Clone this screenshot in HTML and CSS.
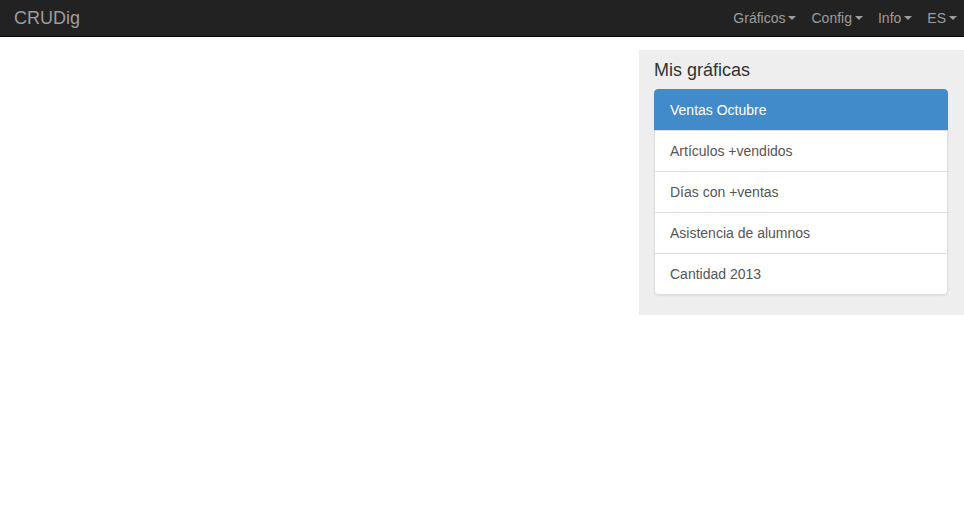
FILE: index.html
```html
<!DOCTYPE html>
<html lang="es">
<head>
<meta charset="utf-8">
<title>CRUDig</title>
<link rel="stylesheet" href="styles.css">
</head>
<body>
<nav class="navbar">
  <a class="brand" href="#">CRUDig</a>
  <ul class="nav">
    <li><a href="#">Gráficos<span class="caret"></span></a></li>
    <li><a href="#">Config<span class="caret"></span></a></li>
    <li><a href="#">Info<span class="caret"></span></a></li>
    <li><a href="#">ES<span class="caret"></span></a></li>
  </ul>
</nav>
<main class="main">
  <div class="content"></div>
  <aside class="sidebar">
    <h3 class="sidebar-title">Mis gráficas</h3>
    <div class="list-group">
      <a class="list-item active" href="#">Ventas Octubre</a>
      <a class="list-item" href="#">Artículos +vendidos</a>
      <a class="list-item" href="#">Días con +ventas</a>
      <a class="list-item" href="#">Asistencia de alumnos</a>
      <a class="list-item" href="#">Cantidad 2013</a>
    </div>
  </aside>
</main>
</body>
</html>
```
FILE: styles.css
```css
* { box-sizing: border-box; }
html, body {
  margin: 0;
  padding: 0;
  background: #fff;
  font-family: "Liberation Sans", Arial, Helvetica, sans-serif;
  font-size: 14px;
  line-height: 20px;
  color: #333;
}
a { text-decoration: none; }

.navbar {
  display: flex;
  align-items: center;
  justify-content: space-between;
  height: 37px;
  background: #222;
  border-bottom: 1px solid #080808;
}
.brand {
  padding: 0 14px;
  font-size: 18px;
  line-height: 36px;
  color: #9d9d9d;
}
.nav {
  display: flex;
  list-style: none;
  margin: 0;
  padding: 0;
}
.nav a {
  display: flex;
  align-items: center;
  padding: 0 7px 0 8px;
  line-height: 36px;
  color: #9d9d9d;
}
.caret {
  display: inline-block;
  width: 0;
  height: 0;
  margin-left: 3px;
  border-top: 4px solid #9d9d9d;
  border-left: 4px solid transparent;
  border-right: 4px solid transparent;
}

.main {
  display: flex;
  justify-content: space-between;
  padding-top: 13px;
}
.content { flex: 1; }
.sidebar {
  width: 325px;
  background: #eee;
  padding: 10px 16px 20px 15px;
}
.sidebar-title {
  margin: 0 0 9px;
  font-size: 18px;
  font-weight: normal;
  line-height: 20px;
  color: #333;
}
.list-group {
  display: flex;
  flex-direction: column;
  border-radius: 4px;
  box-shadow: 0 1px 2px rgba(0,0,0,0.075);
}
.list-item {
  display: block;
  padding: 10px 15px;
  margin-bottom: -1px;
  background: #fff;
  border: 1px solid #ddd;
  color: #555;
}
.list-item:first-child {
  border-top-left-radius: 4px;
  border-top-right-radius: 4px;
}
.list-item:last-child {
  margin-bottom: 0;
  border-bottom-left-radius: 4px;
  border-bottom-right-radius: 4px;
}
.list-item.active {
  background: #428bca;
  border-color: #428bca;
  color: #fff;
}
```
